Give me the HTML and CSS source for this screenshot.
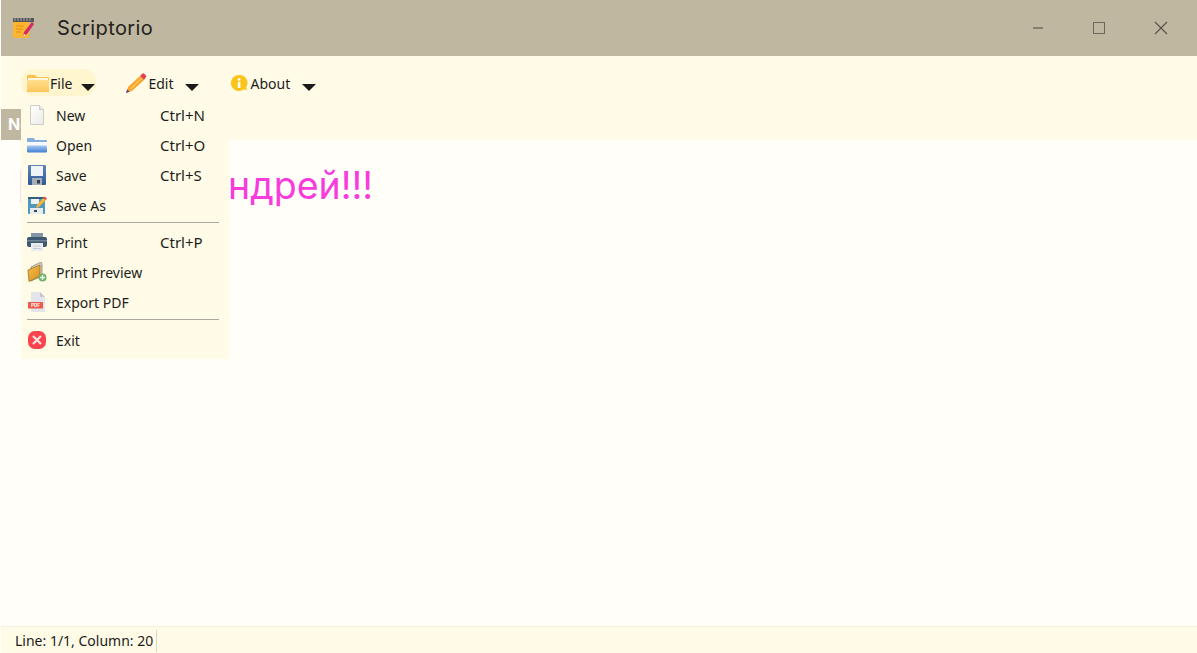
FILE: index.html
```html
<!DOCTYPE html>
<html lang="en">
  <head>
    <meta charset="UTF-8" />
    <title>Scriptorio</title>
    <link rel="stylesheet" href="styles.css">
  </head>
  <body>
    <svg class="defs" width="0" height="0">
      <defs>
        <linearGradient id="gFolder" x1="0" y1="0" x2="0" y2="1"><stop offset="0" stop-color="#ffdf8f"/><stop offset="1" stop-color="#fdc65a"/></linearGradient>
        <linearGradient id="gBlue" x1="0" y1="0" x2="0" y2="1"><stop offset="0" stop-color="#a9c8f0"/><stop offset="1" stop-color="#3f7fd6"/></linearGradient>
        <linearGradient id="gFloppy" x1="0" y1="0" x2="0" y2="1"><stop offset="0" stop-color="#5f86bb"/><stop offset="1" stop-color="#2f5a94"/></linearGradient>
        <linearGradient id="gPage" x1="0" y1="0" x2="1" y2="1"><stop offset="0" stop-color="#ffffff"/><stop offset="1" stop-color="#ecebe6"/></linearGradient>
        <linearGradient id="gManila" x1="0" y1="0" x2="1" y2="1"><stop offset="0" stop-color="#f6c04a"/><stop offset="1" stop-color="#d98f1e"/></linearGradient>
      </defs>
    </svg>
    <div class="window">
      <header class="titlebar">
        <svg class="app-icon" viewBox="0 0 24 24" width="24" height="24">
          <rect x="2" y="6" width="16" height="16" rx="1" fill="#fdb52f"/>
          <rect x="2" y="2" width="21" height="4" fill="#57555c"/>
          <path d="M4 2v3M7 2v3M10 2v3M13 2v3M16 2v3M19 2v3" stroke="#a9a7a4" stroke-width="1"/>
          <path d="M5 10h8M5 13h7M5 16h5" stroke="#e8891c" stroke-width="1"/>
          <path d="M12 21l1-5 8-10 2 2-7 10z" fill="#d8285f"/>
          <path d="M12 21l1-3 2 1z" fill="#fff0c8"/>
        </svg>
        <span class="app-name">Scriptorio</span>
        <div class="win-buttons">
          <svg viewBox="0 0 12 12" width="12" height="12"><path d="M1 6h10" stroke="#6b675a" stroke-width="1.4"/></svg>
          <svg viewBox="0 0 12 12" width="12" height="12"><rect x=".5" y=".5" width="11" height="11" fill="none" stroke="#6b675a"/></svg>
          <svg viewBox="0 0 14 14" width="14" height="14"><path d="M1 1l12 12M13 1L1 13" stroke="#55524a" stroke-width="1.1"/></svg>
        </div>
      </header>

      <nav class="menubar">
        <div class="menu-top menu-file">
          <svg viewBox="0 0 22 18" width="22" height="18">
            <path d="M0 2a1 1 0 0 1 1-1h7l2 2h11a1 1 0 0 1 1 1v14H0z" fill="#fcc04f"/>
            <path d="M1 4h20v2H1z" fill="#fff6dc"/>
            <path d="M0 6h22v12H0z" fill="url(#gFolder)"/>
          </svg>
          <span>File</span>
          <i class="caret"></i>
        </div>
        <div class="menu-top menu-edit">
          <svg viewBox="0 0 22 22" width="22" height="22">
            <path d="M1 21l2-6L15 4l4 4L7 19z" fill="#f9a62b"/>
            <path d="M5.500 17l11-11" stroke="#fdc45c" stroke-width="1.500"/>
            <path d="M15 4l2.500-2.500a1 1 0 0 1 1.400 0l2.100 2.100a1 1 0 0 1 0 1.400L19 8z" fill="#e5404a"/>
            <path d="M1 21l1.200-3.600 2.400 2.400z" fill="#4b3a9c"/>
          </svg>
          <span>Edit</span>
          <i class="caret"></i>
        </div>
        <div class="menu-top menu-about">
          <svg viewBox="0 0 18 18" width="18" height="18">
            <path d="M9 1a8 8 0 1 0 5 14.200l3 1.300-.8-3.200A8 8 0 0 0 9 1z" fill="#fcc419"/>
            <rect x="7.800" y="7.800" width="2.600" height="6.200" fill="#fff"/>
            <rect x="7.800" y="4.200" width="2.600" height="2.400" fill="#fff"/>
          </svg>
          <span>About</span>
          <i class="caret"></i>
        </div>
      </nav>

      <div class="tabstrip">
        <div class="tab">New</div>
      </div>

      <main class="editor">
        <p class="doc-text">ндрей!!!</p>
      </main>

      <footer class="statusbar">
        <span class="status-cell">Line: 1/1, Column: 20</span>
      </footer>

      <div class="dropdown">
        <div class="item">
          <svg viewBox="0 0 20 20" width="20" height="20"><path d="M3.500 .5h9l4 4v15h-13z" fill="url(#gPage)" stroke="#cfcdc6"/><path d="M12.500 .5v4h4" fill="#e8e7e2" stroke="#cfcdc6"/></svg>
          <span class="label">New</span><span class="keys">Ctrl+N</span>
        </div>
        <div class="item">
          <svg viewBox="0 0 20 20" width="20" height="20"><path d="M0 4a1 1 0 0 1 1-1h6l1 2h11a1 1 0 0 1 1 1v2H0z" fill="#86acdc"/><rect x="0" y="7" width="20" height="3.500" fill="#f6f8fb"/><rect x="0" y="10.500" width="20" height="7" rx="1" fill="url(#gBlue)"/></svg>
          <span class="label">Open</span><span class="keys">Ctrl+O</span>
        </div>
        <div class="item">
          <svg viewBox="0 0 20 20" width="20" height="20"><rect x="1" y="0" width="18" height="20" rx="1" fill="url(#gFloppy)"/><rect x="4" y="1" width="12" height="10" fill="#f1f4f7"/><rect x="5" y="13" width="10" height="7" fill="#a5afba"/><rect x="10" y="15" width="3" height="3.500" fill="#363f4b"/></svg>
          <span class="label">Save</span><span class="keys">Ctrl+S</span>
        </div>
        <div class="item">
          <svg viewBox="0 0 20 20" width="20" height="20"><rect x="1" y="2" width="17" height="17" rx="1" fill="#4e97bd"/><rect x="1" y="2" width="17" height="2" fill="#2f5f7d"/><rect x="4" y="4" width="8" height="5" fill="#eef2f4"/><rect x="3" y="13" width="13" height="6" fill="#e8ecee"/><rect x="7" y="15" width="3" height="2" fill="#3a4350"/><path d="M9 13l1-3 6-7 3 2-7 7z" fill="#f4b43a"/><path d="M16 3l1.500-1.500 2.500 2L19 5z" fill="#d84a4a"/></svg>
          <span class="label">Save As</span>
        </div>
        <hr class="sep" />
        <div class="item">
          <svg viewBox="0 0 20 20" width="20" height="20"><rect x="4" y="1" width="12" height="5" fill="#8495a5"/><rect x="0" y="5" width="20" height="10" rx="2" fill="#3f5871"/><rect x="0" y="8" width="20" height="1.500" fill="#6f8498"/><rect x="4" y="11" width="12" height="8" fill="#e9edef"/><path d="M6 14h8M6 16.500h8" stroke="#c3cbd1"/></svg>
          <span class="label">Print</span><span class="keys">Ctrl+P</span>
        </div>
        <div class="item">
          <svg viewBox="0 0 20 20" width="20" height="20"><path d="M4 5l10-5 1 2v12l-11 5z" fill="#d6d1c2" stroke="#8a7a50" stroke-width=".7"/><path d="M1 8l12-5v11L2 19.500z" fill="url(#gManila)" stroke="#8a6a20" stroke-width=".7"/><circle cx="15.500" cy="15.500" r="4" fill="#6db36a"/><path d="M15.500 13v5M13 15.500h5" stroke="#e9f5e6" stroke-width="1.300"/></svg>
          <span class="label">Print Preview</span>
        </div>
        <div class="item">
          <svg viewBox="0 0 20 20" width="20" height="20"><path d="M4 0h9l5 5v15H4z" fill="#e3e5ea"/><path d="M13 0l5 5h-5z" fill="#c5c8d0"/><rect x="1" y="10" width="15" height="6.500" rx=".5" fill="#f0584a"/><text x="8.500" y="15" class="pdf-tag">PDF</text></svg>
          <span class="label">Export PDF</span>
        </div>
        <hr class="sep sep-last" />
        <div class="item">
          <svg viewBox="0 0 20 20" width="20" height="20"><rect x="1" y="1" width="18" height="18" rx="7" fill="#f9444e"/><path d="M6 6l8 8M14 6l-8 8" stroke="#f6e6e0" stroke-width="2.200"/></svg>
          <span class="label">Exit</span>
        </div>
      </div>
    </div>
  </body>
</html>
```

FILE: styles.css
```css
html,
body {
  margin: 0;
  padding: 0;
  height: 100%;
  overflow: hidden;
}
.defs {
  position: absolute;
}
.window {
  position: relative;
  display: flex;
  flex-direction: column;
  height: 653px;
  padding-left: 1px;
  box-sizing: border-box;
  font-family: "Noto Sans", "Open Sans", sans-serif;
  font-size: 14px;
  color: #1c1c1c;
  background-color: #fffef8;
}
.titlebar {
  display: flex;
  align-items: center;
  height: 56px;
  padding-left: 10px;
  background-color: #bfb7a0;
  flex: none;
}
.app-icon {
  display: block;
}
.app-name {
  margin-left: 22px;
  font-family: Inter, sans-serif;
  font-size: 20px;
  letter-spacing: 0.4px;
  color: #23211c;
}
.win-buttons {
  display: flex;
  align-items: center;
  gap: 49px;
  margin-left: auto;
  padding-right: 29px;
}
.menubar {
  display: flex;
  align-items: flex-start;
  height: 53px;
  padding: 13px 0 0 20px;
  background-color: #fffbe6;
  flex: none;
  box-sizing: border-box;
}
.menu-top {
  display: flex;
  align-items: center;
  height: 27px;
  padding: 0 1px 0 6px;
  border-radius: 13px;
}
.menu-top span {
  padding-top: 2px;
}
.caret {
  width: 0;
  height: 0;
  margin-top: 10px;
  border-left: 7px solid transparent;
  border-right: 7px solid transparent;
  border-top: 7px solid #1a1a1a;
}
.menu-file {
  margin-right: 23px;
  background-color: #fff5cf;
}
.menu-file span {
  margin-left: 1px;
}
.menu-file .caret {
  margin-left: 9px;
}
.menu-edit {
  margin-right: 24px;
}
.menu-edit span {
  margin-left: 1px;
}
.menu-edit .caret {
  margin-left: 12px;
}
.menu-about span {
  margin-left: 2px;
}
.menu-about .caret {
  margin-left: 12px;
}
.tabstrip {
  display: flex;
  height: 31px;
  background-color: #fffbe6;
  flex: none;
}
.tab {
  width: 60px;
  font-family: Inter, sans-serif;
  font-weight: 700;
  font-size: 16px;
  line-height: 31px;
  padding-left: 7px;
  box-sizing: border-box;
  color: #fff;
  background-color: #bfb7a0;
}
.editor {
  flex: 1;
}
.doc-text {
  height: 32px;
  margin: 31px 0 0 19px;
  padding-left: 207px;
  border-left: 1px solid #fcd9f4;
  font-family: Inter, sans-serif;
  font-size: 37.500px;
  line-height: 30px;
  color: #f83bdc;
  white-space: nowrap;
}
.statusbar {
  display: flex;
  align-items: center;
  height: 27px;
  flex: none;
  padding: 1px 0 0 14px;
  background-color: #fffbe6;
  border-top: 1px solid #f5f0df;
  box-sizing: border-box;
}
.status-cell {
  padding-right: 3px;
  line-height: 22px;
  border-right: 1px solid #d9d6cc;
}
.dropdown {
  position: absolute;
  left: 21px;
  top: 100px;
  width: 208px;
  height: 259px;
  background-color: #fffbe6;
}
.item {
  display: flex;
  align-items: center;
  height: 30px;
  padding-left: 6px;
}
.label {
  margin-left: 9px;
  width: 104px;
}
.keys {
  font-size: 15px;
}
.sep {
  height: 1px;
  margin: 2px 10px 4px 6px;
  border: 0;
  background-color: #aaa89f;
}
.sep-last {
  margin-bottom: 5px;
}
.pdf-tag {
  font-family: "Liberation Sans", sans-serif;
  font-size: 4.500px;
  font-weight: 700;
  text-anchor: middle;
  fill: #fff;
}
```
